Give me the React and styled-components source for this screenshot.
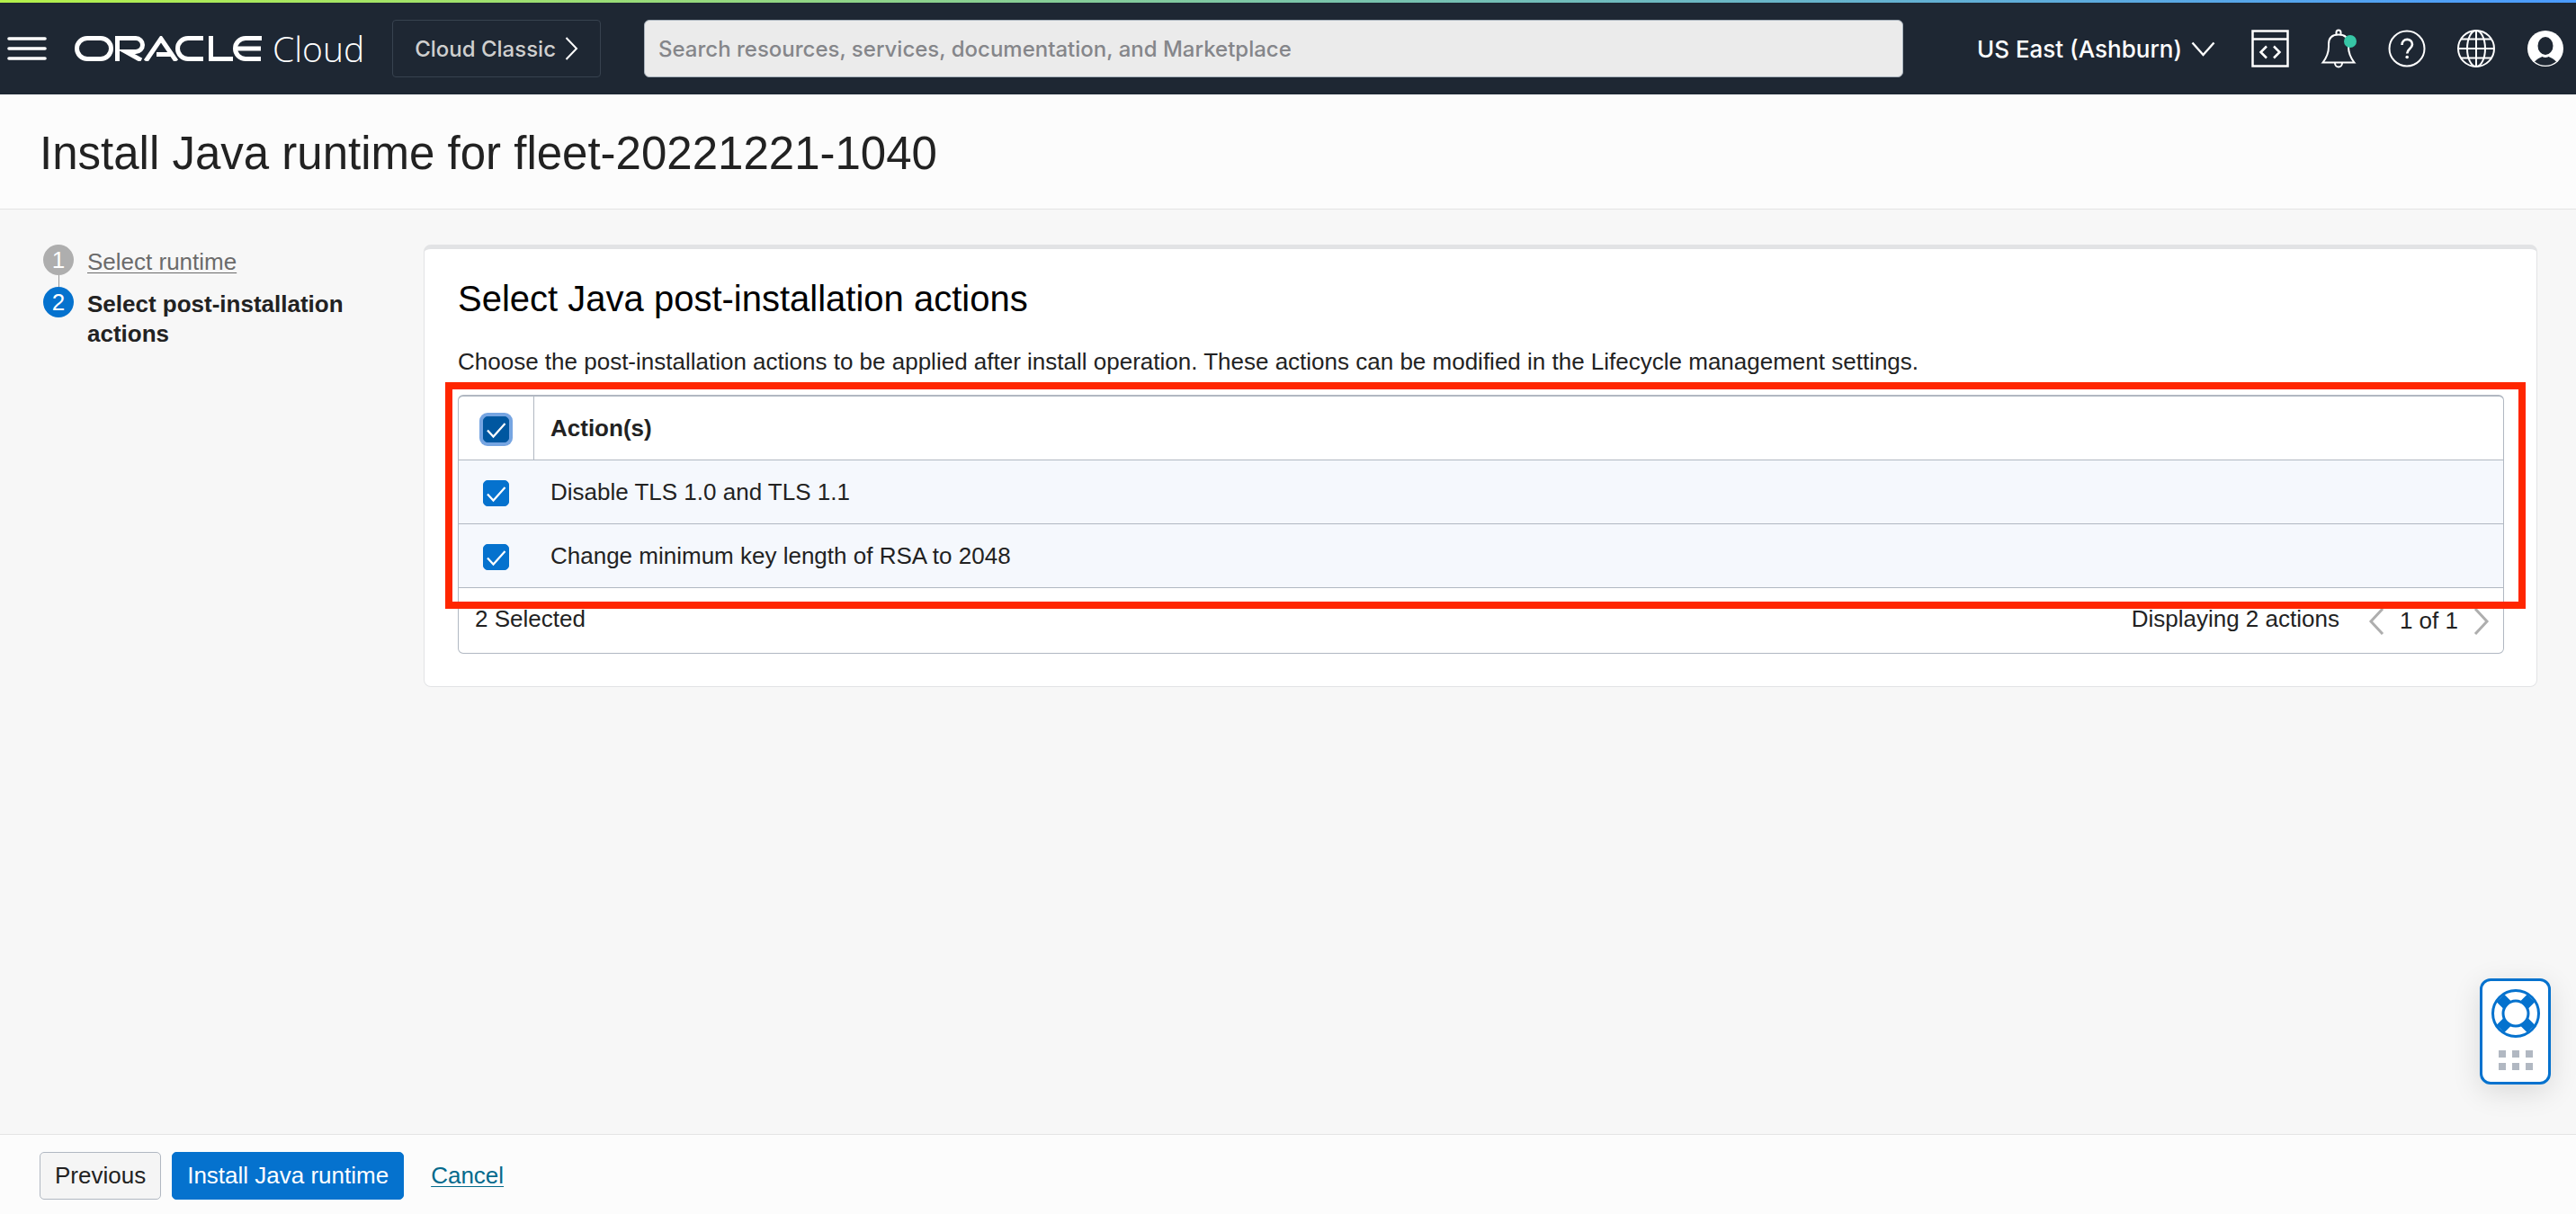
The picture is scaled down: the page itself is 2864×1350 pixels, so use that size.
import React, { useEffect, useRef, useState } from "react";
import styled, { createGlobalStyle, css } from "styled-components";

const color = {
  ink: "#222222",
  header: "#1e2733",
  blue: "#0572ce",
  line: "#b1b8c2",
  soft: "#e2e3e5",
  page: "#f7f7f7",
  bar: "#fcfcfc",
};

const GlobalStyle = createGlobalStyle`
  *, *::before, *::after { box-sizing: border-box; }
  body {
    margin: 0;
    background: ${color.page};
    color: ${color.ink};
    font-family: "Liberation Sans", Arial, sans-serif;
    font-size: 26px;
    line-height: 33px;
  }
  h1, h2, p, ol { margin: 0; padding: 0; font-weight: 400; }
  button, input { font: inherit; }
`;

const Page = styled.div`
  display: flex;
  flex-direction: column;
  min-height: 100vh;
`;

/* Top bar */
const TopBar = styled.header`
  display: flex;
  align-items: center;
  justify-content: space-between;
  height: 105px;
  padding: 3px 13px 0 8px;
  background:
    linear-gradient(90deg, #b4f04b, #7cc6a8 50%, #4a9bff) top / 100% 3px no-repeat,
    ${color.header};
  font-family: Inter, Roboto, sans-serif;
  font-size: 24px;
  font-weight: 500;
`;

const BarGroup = styled.div`
  display: flex;
  align-items: center;
  gap: ${(p) => p.$gap}px;
`;

const BarButton = styled.button`
  display: flex;
  align-items: center;
  gap: 10px;
  padding: 0;
  border: 0;
  background: none;
  color: #ffffff;
  cursor: pointer;
  svg { display: block; }
`;

const RegionButton = styled(BarButton)`
  font-size: 26px;
`;

const ClassicButton = styled(BarButton)`
  height: 64px;
  padding: 0 24px;
  border: 1px solid #37424f;
  border-radius: 4px;
  color: #cfcfcf;
`;

const Brand = styled.a`
  display: flex;
  align-items: center;
  gap: 10px;
  color: #ffffff;
  text-decoration: none;
`;

const BrandSuffix = styled.span`
  font-family: "Open Sans", sans-serif;
  font-size: 39px;
  font-weight: 300;
  line-height: 48px;
`;

const Search = styled.input`
  flex: 1;
  max-width: 1400px;
  height: 64px;
  margin: 0 auto 0 48px;
  padding: 0 15px;
  border: 1px solid #a9b3bd;
  border-radius: 6px;
  background: #ebebeb;
  color: ${color.ink};
  &::placeholder { color: #85868a; opacity: 1; }
`;

/* Title */
const TitleBar = styled.div`
  padding: 38px 44px 33px;
  border-bottom: 1px solid #e4e4e4;
  background: ${color.bar};
`;

const Title = styled.h1`
  font-size: 51px;
  line-height: 56px;
`;

/* Body */
const Body = styled.div`
  display: flex;
  flex: 1;
  align-items: flex-start;
  gap: 44px;
  padding: 39px 43px 39px 48px;
`;

const Steps = styled.ol`
  display: flex;
  flex: 0 0 379px;
  flex-direction: column;
  gap: 11px;
  list-style: none;
`;

const Step = styled.li`
  display: grid;
  grid-template-columns: 34px 1fr;
  column-gap: 15px;
`;

const StepMarker = styled.span`
  position: relative;
  width: 34px;
  height: 34px;
  border-radius: 50%;
  background: ${(p) => (p.$active ? color.blue : "#aeaeae")};
  color: #ffffff;
  line-height: 34px;
  text-align: center;
  ${(p) =>
    !p.$active &&
    css`
      &::after {
        content: "";
        position: absolute;
        top: 100%;
        left: 50%;
        height: 13px;
        border-left: 1px solid #9a9a9a;
      }
    `}
`;

const StepLabel = styled.div`
  max-width: 300px;
  padding-top: 3px;
  font-weight: ${(p) => (p.$active ? 700 : 400)};
`;

const TextLink = styled.a`
  color: ${(p) => p.$tone};
  text-decoration: underline;
  text-decoration-thickness: 1px;
  text-underline-offset: 3px;
`;

const Card = styled.section`
  flex: 1;
  padding: 31px 36px 36px 37px;
  border: 1px solid ${color.soft};
  border-top: 5px solid ${color.soft};
  border-radius: 8px;
  background: #ffffff;
`;

const CardTitle = styled.h2`
  color: #000000;
  font-size: 40px;
  line-height: 48px;
`;

const CardText = styled.p`
  margin: 30px 0 20px;
`;

const Highlighted = styled.div`
  position: relative;
`;

const HighlightFrame = styled.div`
  position: absolute;
  inset: -14px -24px 50px -14px;
  border: 8px solid #ff2600;
  pointer-events: none;
`;

const TablePanel = styled.div`
  border: 1px solid ${color.line};
  border-top-width: 2px;
  border-radius: 6px;
`;

const Table = styled.table`
  width: 100%;
  border-collapse: separate;
  border-spacing: 0;
`;

const cell = css`
  height: 71px;
  padding: 0 18px;
  border-bottom: 1px solid ${color.line};
  text-align: left;
  vertical-align: middle;
`;

const HeadCell = styled.th`${cell}`;
const DataCell = styled.td`
  ${cell}
  background: #f5f8fd;
`;

const checkColumn = css`
  width: 84px;
  padding: 2px 0 0 27px;
`;
const HeadCheckCell = styled.td`
  ${cell}
  ${checkColumn}
  border-right: 1px solid ${color.line};
`;
const CheckCell = styled(DataCell)`${checkColumn}`;

const CheckBox = styled.span`
  display: grid;
  width: 29px;
  height: 29px;
  > * { grid-area: 1 / 1; }
  svg { width: 29px; height: 29px; pointer-events: none; }
`;

const CheckInput = styled.input`
  width: 29px;
  height: 29px;
  margin: 0;
  appearance: none;
  border: 1px solid ${color.blue};
  border-radius: 5px;
  background: #ffffff;
  &:checked { background: ${color.blue}; }
  ${(p) =>
    p.$focused &&
    css`
      border-color: #0057a0;
      box-shadow: 0 0 0 4px #76a5e2;
      &:checked { background: #0057a0; }
    `}
`;

const TableFooter = styled.div`
  display: flex;
  justify-content: space-between;
  min-height: 72px;
  padding: 18px 15px 0 18px;
`;

const Pager = styled.div`
  display: flex;
  align-items: flex-start;
  gap: 32px;
`;

const PagerControls = styled.div`
  display: flex;
  align-items: center;
  gap: 17px;
  padding-top: 2px;
`;

const PagerButton = styled.button`
  display: block;
  padding: 0;
  border: 0;
  background: none;
  svg { display: block; }
`;

/* Action bar */
const ActionBar = styled.footer`
  display: flex;
  align-items: center;
  gap: 12px;
  height: 89px;
  padding: 3px 44px 0;
  border-top: 1px solid #e4e4e4;
  background: ${color.bar};
`;

const Button = styled.button`
  height: 53px;
  padding: 0 16px;
  border: 1px solid ${(p) => (p.$primary ? color.blue : color.line)};
  border-radius: 5px;
  background: ${(p) => (p.$primary ? color.blue : "#f5f5f5")};
  color: ${(p) => (p.$primary ? "#ffffff" : color.ink)};
  cursor: pointer;
`;

const CancelSlot = styled.div`
  padding-left: 18px;
`;

const HelpWidget = styled.button`
  position: fixed;
  right: 28px;
  bottom: 144px;
  display: flex;
  flex-direction: column;
  align-items: center;
  gap: 14px;
  width: 79px;
  padding: 9px 0 13px;
  border: 3px solid ${color.blue};
  border-radius: 12px;
  background: #ffffff;
  box-shadow: 0 8px 32px rgba(0, 0, 0, 0.12);
  svg { display: block; }
`;

const OracleMark = () => (
  <svg width="210" height="28" viewBox="0 0 210 28" fill="none" stroke="#fff" strokeWidth="5" role="img" aria-label="Oracle">
    <rect x="2.5" y="2.5" width="38" height="23" rx="11.5" />
    <path d="M47.500 28V2.500H68a7.500 7.500 0 0 1 0 15H57L74 27" />
    <path d="M79 28 96 3l17 25M91 20.500h16" />
    <path d="M143 2.500H126a11.500 11.500 0 0 0 0 23h17" />
    <path d="M151.500 0V25.500H176" />
    <path d="M208 2.500H190a11.500 11.500 0 0 0 0 23h17M180 14h27" />
  </svg>
);

const MenuIcon = () => (
  <svg width="44" height="26" viewBox="0 0 44 26" stroke="#fff" strokeWidth="3.600" strokeLinecap="round">
    <path d="M2 2H42M2 13H42M2 24H42" />
  </svg>
);

const Chevron = ({ w, h, d, stroke, width = 2 }) => (
  <svg width={w} height={h} viewBox={`0 0 ${w} ${h}`} fill="none" stroke={stroke} strokeWidth={width}>
    <path d={d} />
  </svg>
);

const TerminalIcon = () => (
  <svg width="42" height="42" viewBox="0 0 42 42" fill="none" stroke="#fff" strokeWidth="2.500">
    <path d="M1.500 1.500H40.500V40.500H1.500ZM1.500 10.500H40.500" />
    <path d="M17 18.500 10.500 25 17 31.500M25 18.500 31.500 25 25 31.500" />
  </svg>
);

const BellIcon = () => (
  <svg width="42" height="44" viewBox="-2 0 42 44" fill="none" stroke="#fff" strokeWidth="2">
    <path d="M1.500 37.500C5 33 8 28 8 20v-3C8 10 12 6.500 19 6.500S30 10 30 17v3c0 8 3 13 6.500 17.500Z" />
    <path d="M16.500 6.500V4a2.500 2.500 0 0 1 5 0v2.500M15 38c0 6 8 6 8 0" />
    <circle cx="32" cy="14" r="7" fill="#37c6a6" stroke="none" />
  </svg>
);

const HelpIcon = () => (
  <svg width="42" height="42" viewBox="0 0 42 42" fill="none" stroke="#fff" strokeWidth="2">
    <circle cx="21" cy="21" r="19.500" />
    <path d="M15.500 17c0-8 11.500-8 11.500-.8 0 5-5.800 5-5.800 10.300" strokeWidth="2.600" />
    <circle cx="21.200" cy="30.500" r="1.800" fill="#fff" stroke="none" />
  </svg>
);

const GlobeIcon = () => (
  <svg width="44" height="44" viewBox="0 0 44 44" fill="none" stroke="#fff" strokeWidth="2">
    <circle cx="22" cy="22" r="20" />
    <ellipse cx="22" cy="22" rx="10" ry="20" />
    <path d="M22 2V42M2 22H42M5 11.500H39M5 32.500H39" />
  </svg>
);

const UserIcon = () => (
  <svg width="42" height="42" viewBox="0 0 42 42">
    <circle cx="21" cy="21" r="20" fill="#fff" />
    <ellipse cx="21" cy="18" rx="8.500" ry="10" fill={color.header} />
    <path d="M9 35.500c3-3.500 5.500-4 8.500-5.500q3.500-1.500 7 0c3 1.500 5.500 2 8.500 5.500a19 19 0 0 1-24 0Z" fill={color.header} />
    <path d="M16 27q5 4 10 0v2q-5 4-10 0Z" fill="#fff" />
  </svg>
);

const LifebuoyIcon = () => (
  <svg width="54" height="54" viewBox="0 0 54 54" fill="none" stroke={color.blue}>
    <circle cx="27" cy="27" r="25.500" strokeWidth="3" />
    <circle cx="27" cy="27" r="14" strokeWidth="3" />
    <path d="M10 10 17 17M44 10 37 17M10 44 17 37M44 44 37 37" strokeWidth="12" />
  </svg>
);

const GripDots = () => (
  <svg width="38" height="22" viewBox="0 0 38 22" fill={color.line}>
    {[0, 15, 30].map((x) =>
      [0, 14].map((y) => <rect key={`${x}-${y}`} x={x} y={y} width="8" height="8" />)
    )}
  </svg>
);

const Check = ({ label, checked, indeterminate, focused, onChange }) => {
  const ref = useRef(null);
  useEffect(() => {
    ref.current.indeterminate = indeterminate;
  }, [indeterminate]);
  return (
    <CheckBox>
      <CheckInput ref={ref} type="checkbox" aria-label={label} checked={checked} $focused={focused} onChange={onChange} />
      {checked && (
        <svg viewBox="0 0 29 29" fill="none" stroke="#fff" strokeWidth="2.200">
          <path d="M5 15.500 11.500 22.500 24.500 8" />
        </svg>
      )}
    </CheckBox>
  );
};

const ACTIONS = ["Disable TLS 1.0 and TLS 1.1", "Change minimum key length of RSA to 2048"];

export default function App() {
  const [picked, setPicked] = useState(ACTIONS);
  const all = picked.length === ACTIONS.length;
  const toggle = (name) =>
    setPicked((now) => (now.includes(name) ? now.filter((n) => n !== name) : [...now, name]));

  return (
    <Page>
      <GlobalStyle />
      <TopBar>
        <BarGroup $gap={31}>
          <BarButton aria-label="Menu"><MenuIcon /></BarButton>
          <Brand href="#home"><OracleMark /><BrandSuffix>Cloud</BrandSuffix></Brand>
          <ClassicButton>
            Cloud Classic
            <Chevron w={15} h={26} d="M1.500 1 13 13 1.500 25" stroke="#fff" />
          </ClassicButton>
        </BarGroup>
        <Search type="search" aria-label="Search" placeholder="Search resources, services, documentation, and Marketplace" />
        <BarGroup $gap={40}>
          <RegionButton>
            US East (Ashburn)
            <Chevron w={27} h={17} d="M1.500 1.500 13.500 15 25.500 1.500" stroke="#fff" width={2.4} />
          </RegionButton>
          <BarGroup $gap={34}>
            <BarButton aria-label="Developer tools"><TerminalIcon /></BarButton>
            <BarButton aria-label="Announcements"><BellIcon /></BarButton>
            <BarButton aria-label="Help"><HelpIcon /></BarButton>
            <BarButton aria-label="Language"><GlobeIcon /></BarButton>
            <BarButton aria-label="Profile"><UserIcon /></BarButton>
          </BarGroup>
        </BarGroup>
      </TopBar>

      <TitleBar>
        <Title>Install Java runtime for fleet-20221221-1040</Title>
      </TitleBar>

      <Body>
        <Steps>
          <Step>
            <StepMarker>1</StepMarker>
            <StepLabel><TextLink href="#runtime" $tone="#6b6b6b">Select runtime</TextLink></StepLabel>
          </Step>
          <Step aria-current="step">
            <StepMarker $active>2</StepMarker>
            <StepLabel $active>Select post-installation actions</StepLabel>
          </Step>
        </Steps>

        <Card>
          <CardTitle>Select Java post-installation actions</CardTitle>
          <CardText>
            Choose the post-installation actions to be applied after install operation. These actions can be modified in the Lifecycle management settings.
          </CardText>
          <Highlighted>
            <TablePanel>
              <Table>
                <thead>
                  <tr>
                    <HeadCheckCell>
                      <Check
                        label="Select all actions"
                        checked={all}
                        indeterminate={!all && picked.length > 0}
                        focused
                        onChange={() => setPicked(all ? [] : ACTIONS)}
                      />
                    </HeadCheckCell>
                    <HeadCell scope="col">Action(s)</HeadCell>
                  </tr>
                </thead>
                <tbody>
                  {ACTIONS.map((name) => (
                    <tr key={name}>
                      <CheckCell>
                        <Check label={name} checked={picked.includes(name)} indeterminate={false} onChange={() => toggle(name)} />
                      </CheckCell>
                      <DataCell>{name}</DataCell>
                    </tr>
                  ))}
                </tbody>
              </Table>
              <TableFooter>
                <span>{picked.length} Selected</span>
                <Pager>
                  <span>Displaying {ACTIONS.length} actions</span>
                  <PagerControls>
                    <PagerButton aria-label="Previous page">
                      <Chevron w={18} h={30} d="M16 1 3 15 16 29" stroke="#aeaeae" width={3} />
                    </PagerButton>
                    <span>1 of 1</span>
                    <PagerButton aria-label="Next page">
                      <Chevron w={18} h={30} d="M2 1 15 15 2 29" stroke="#aeaeae" width={3} />
                    </PagerButton>
                  </PagerControls>
                </Pager>
              </TableFooter>
            </TablePanel>
            <HighlightFrame />
          </Highlighted>
        </Card>
      </Body>

      <ActionBar>
        <Button>Previous</Button>
        <Button $primary>Install Java runtime</Button>
        <CancelSlot><TextLink href="#cancel" $tone="#046a8c">Cancel</TextLink></CancelSlot>
      </ActionBar>

      <HelpWidget aria-label="Support">
        <LifebuoyIcon />
        <GripDots />
      </HelpWidget>
    </Page>
  );
}
